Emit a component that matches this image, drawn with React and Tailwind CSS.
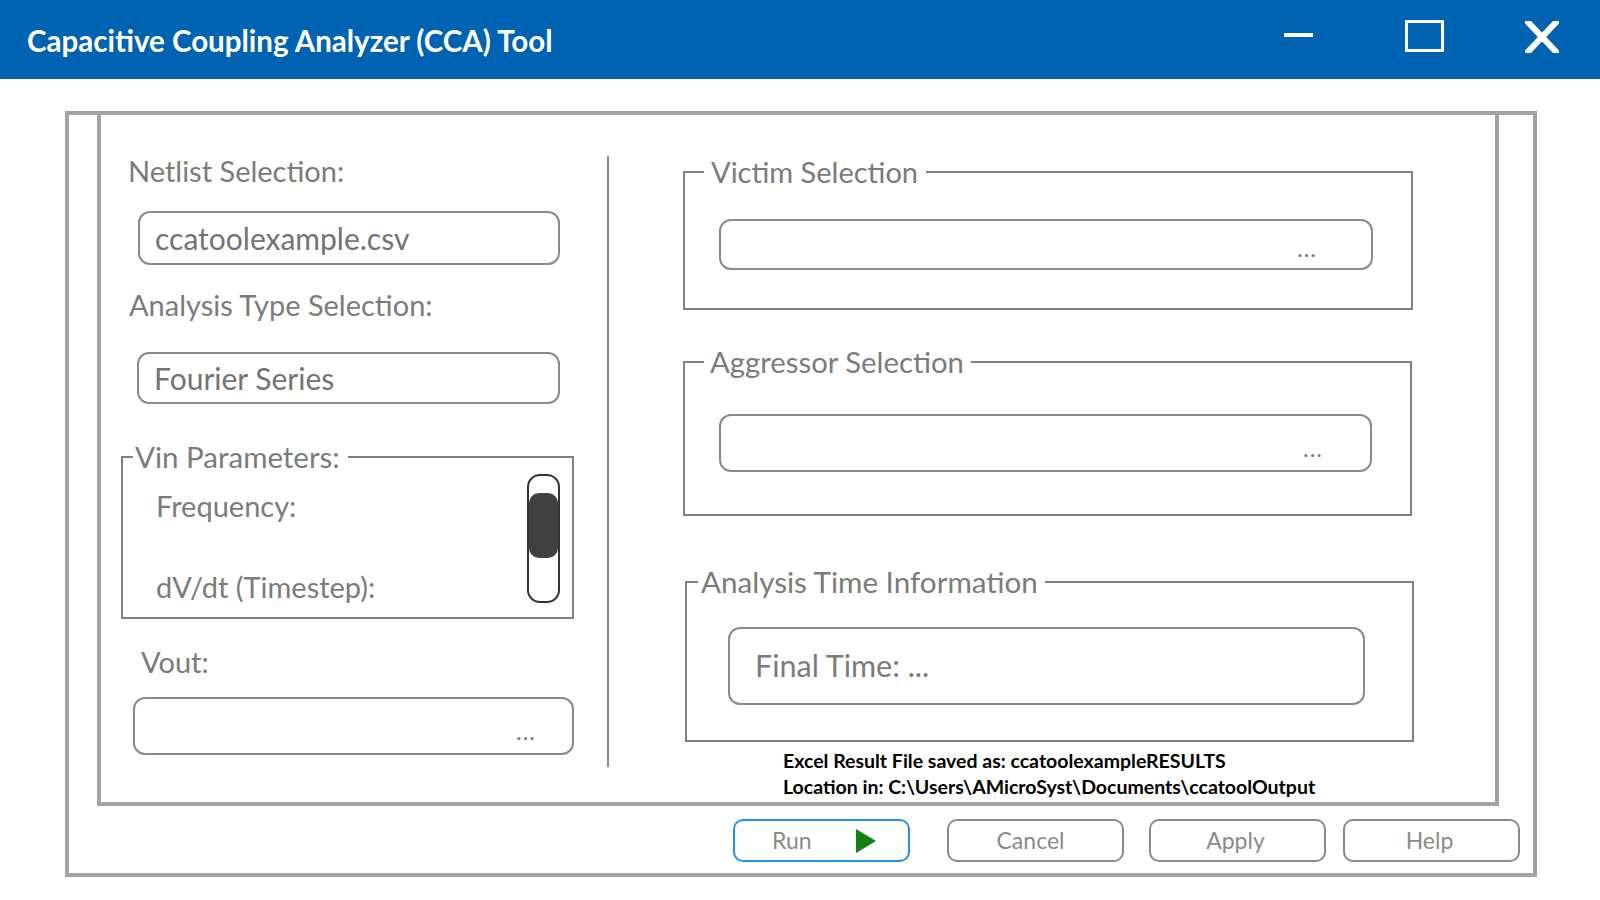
import React from 'react';

const font = { fontFamily: 'Lato, "Open Sans", sans-serif' };

function GroupBox({ title, legendClass, className, children }) {
  return (
    <fieldset className={`border-2 border-[#808080] ${className}`}>
      <legend className={`h-[36px] leading-[36px] text-[#7b7b7b] ${legendClass}`}>{title}</legend>
      {children}
    </fieldset>
  );
}

function PickBox({ className, dotsClass }) {
  return (
    <div className={`flex items-center justify-end rounded-[12px] border-2 border-[#8a8a8a] ${className}`}>
      <span className={`text-[24px] tracking-[1px] text-[#7b7b7b] ${dotsClass}`}>...</span>
    </div>
  );
}

function Button({ children, className, borderClass = 'border-[#8a8a8a]' }) {
  return (
    <button className={`flex h-[43px] w-[177px] items-center rounded-[10px] border-2 text-[23px] text-[#8a8a8a] ${borderClass} ${className}`}>
      {children}
    </button>
  );
}

export default function App() {
  return (
    <div className="h-[900px] w-[1600px] overflow-hidden bg-white" style={font}>
      {/* Title bar */}
      <div className="flex h-[79px] items-start bg-[#0063b1] text-white">
        <div className="mt-[21px] ml-[27px] text-[29.5px] leading-[40px] font-bold">
          Capacitive Coupling Analyzer (CCA) Tool
        </div>
        <div className="ml-auto flex items-start">
          <div className="mt-[33px] h-[4px] w-[29px] bg-white" />
          <div className="mt-[20px] ml-[92px] h-[32px] w-[39px] border-[3px] border-white" />
          <svg className="mt-[21px] ml-[81px] mr-[41px]" width="34" height="32" viewBox="0 0 34 32">
            <line x1="-1" y1="-3" x2="35" y2="35" stroke="white" strokeWidth="6" />
            <line x1="35" y1="-3" x2="-1" y2="35" stroke="white" strokeWidth="6" />
          </svg>
        </div>
      </div>

      {/* Dialog frame */}
      <div className="mt-[32px] ml-[65px] flex h-[766px] w-[1472px] flex-col border-4 border-[#a3a3a3]">
        <div className="ml-[28px] flex h-[691px] w-[1402px] border-x-4 border-b-4 border-[#a3a3a3]">
          {/* Left column */}
          <div className="flex w-[506px] flex-col text-[#7b7b7b]">
            <div className="mt-[38px] ml-[27px] h-[36px] text-[29px] leading-[36px]">Netlist Selection:</div>
            <div className="mt-[22px] ml-[37px] flex h-[54px] w-[422px] items-center rounded-[12px] border-2 border-[#8a8a8a] pl-[15px] text-[30px] text-[#737373]">
              ccatoolexample.csv
            </div>
            <div className="mt-[22px] ml-[28px] h-[36px] text-[29px] leading-[36px]">Analysis Type Selection:</div>
            <div className="mt-[29px] ml-[36px] flex h-[52px] w-[423px] items-center rounded-[12px] border-2 border-[#8a8a8a] pl-[15px] text-[30px] text-[#737373]">
              Fourier Series
            </div>

            <GroupBox
              title="Vin Parameters:"
              legendClass="ml-[10px] pl-[2px] pr-[8px] text-[29.5px]"
              className="mt-[35px] ml-[20px] h-[180px] w-[453px]"
            >
              <div className="flex items-start">
                <div className="ml-[33px] flex flex-col text-[29px]">
                  <div className="mt-[13px] h-[36px] leading-[36px]">Frequency:</div>
                  <div className="mt-[45px] h-[36px] leading-[36px]">dV/dt (Timestep):</div>
                </div>
                <div className="mt-[-1px] mr-[12px] ml-auto flex h-[129px] w-[33px] flex-col rounded-[13px] border-2 border-[#333333]">
                  <div className="mt-[17px] h-[65px] rounded-[10px] bg-[#404040]" />
                </div>
              </div>
            </GroupBox>

            <div className="mt-[25px] ml-[40px] h-[36px] text-[29px] leading-[36px]">Vout:</div>
            <PickBox className="mt-[17px] ml-[32px] h-[58px] w-[441px]" dotsClass="mr-[36px] mt-[10px]" />
          </div>

          {/* Divider */}
          <div className="mt-[41px] h-[611px] w-[2px] bg-[#8a8a8a]" />

          {/* Right column */}
          <div className="flex flex-col">
            <GroupBox
              title="Victim Selection"
              legendClass="ml-[19px] pl-[7px] pr-[8px] text-[29px]"
              className="mt-[39px] ml-[74px] h-[156px] w-[730px]"
            >
              <PickBox className="mt-[29px] ml-[34px] h-[51px] w-[654px]" dotsClass="mr-[54px] mt-[6px]" />
            </GroupBox>

            <GroupBox
              title="Aggressor Selection"
              legendClass="ml-[19px] pl-[6px] pr-[7px] text-[29.3px]"
              className="mt-[34px] ml-[74px] h-[172px] w-[729px]"
            >
              <PickBox className="mt-[34px] ml-[34px] h-[58px] w-[653px]" dotsClass="mr-[47px] mt-[10px]" />
            </GroupBox>

            <GroupBox
              title="Analysis Time Information"
              legendClass="ml-[11px] pl-[3px] pr-[7px] text-[29.6px]"
              className="mt-[48px] ml-[76px] h-[178px] w-[729px]"
            >
              <div className="mt-[27px] ml-[41px] flex h-[78px] w-[637px] items-center rounded-[12px] border-2 border-[#8a8a8a] pl-[25px] text-[30.5px] text-[#7b7b7b]">
                Final Time: ...
              </div>
            </GroupBox>

            <div className="mt-[6px] ml-[174px] text-[19.5px] leading-[26px] font-bold text-black">
              <div>Excel Result File saved as: ccatoolexampleRESULTS</div>
              <div>Location in: C:\Users\AMicroSyst\Documents\ccatoolOutput</div>
            </div>
          </div>
        </div>

        {/* Buttons */}
        <div className="mt-[13px] mr-[13px] flex justify-end">
          <Button className="gap-[44px] pl-[37px]" borderClass="border-[#1e90ff]">
            <span>Run</span>
            <svg width="20" height="24" viewBox="0 0 20 24">
              <polygon points="0,0 20,12 0,24" fill="#138013" />
            </svg>
          </Button>
          <Button className="ml-[37px] justify-center pr-[10px]">Cancel</Button>
          <Button className="ml-[25px] justify-center pr-[4px]">Apply</Button>
          <Button className="ml-[17px] justify-center pr-[4px]">Help</Button>
        </div>
      </div>
    </div>
  );
}
